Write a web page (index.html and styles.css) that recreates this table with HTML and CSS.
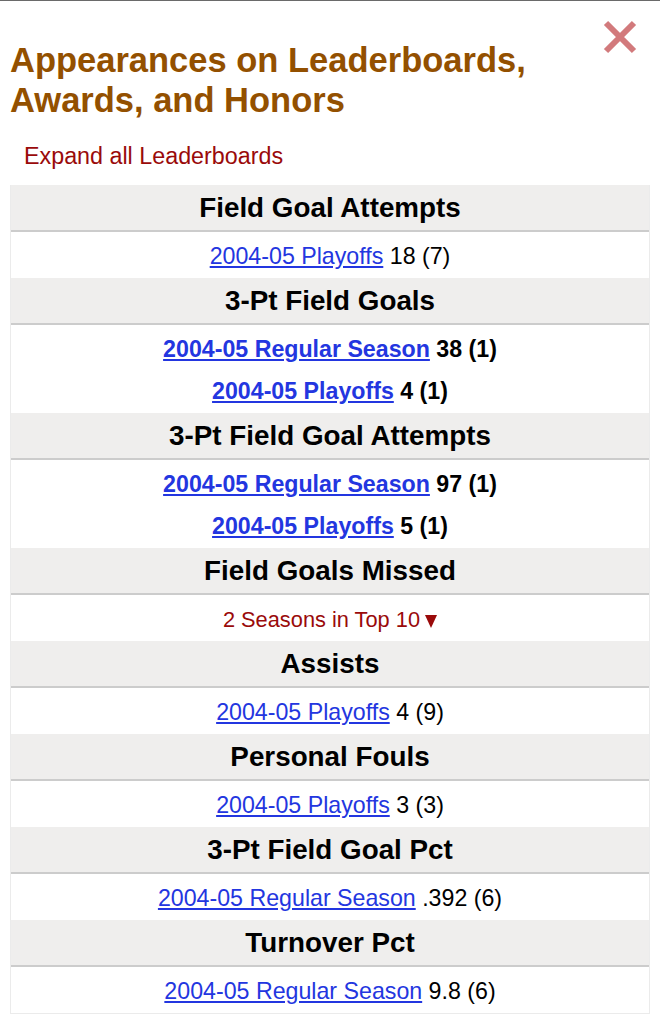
FILE: index.html
```html
<!DOCTYPE html>
<html>
<head>
<meta charset="utf-8">
<link rel="stylesheet" href="styles.css">
</head>
<body>
<div class="modal">
  <button class="close" aria-label="Close">
    <svg width="34" height="34" viewBox="0 0 34 34"><path d="M3 3 L31 31 M31 3 L3 31" stroke="#d27a7c" stroke-width="6" stroke-linecap="butt"/></svg>
  </button>
  <h2 class="title">Appearances on Leaderboards, Awards, and Honors</h2>
  <a class="expand" href="#">Expand all Leaderboards</a>
  <div class="boards">
    <div class="board">
      <div class="bhead">Field Goal Attempts</div>
      <div class="bbody">
        <div class="item"><a href="#">2004-05 Playoffs</a> 18 (7)</div>
      </div>
    </div>
    <div class="board">
      <div class="bhead">3-Pt Field Goals</div>
      <div class="bbody">
        <div class="item lead"><a href="#">2004-05 Regular Season</a> 38 (1)</div>
        <div class="item lead"><a href="#">2004-05 Playoffs</a> 4 (1)</div>
      </div>
    </div>
    <div class="board">
      <div class="bhead">3-Pt Field Goal Attempts</div>
      <div class="bbody">
        <div class="item lead"><a href="#">2004-05 Regular Season</a> 97 (1)</div>
        <div class="item lead"><a href="#">2004-05 Playoffs</a> 5 (1)</div>
      </div>
    </div>
    <div class="board">
      <div class="bhead">Field Goals Missed</div>
      <div class="bbody">
        <div class="item"><span class="toggle">2 Seasons in Top 10 <span class="arrow"></span></span></div>
      </div>
    </div>
    <div class="board">
      <div class="bhead">Assists</div>
      <div class="bbody">
        <div class="item"><a href="#">2004-05 Playoffs</a> 4 (9)</div>
      </div>
    </div>
    <div class="board">
      <div class="bhead">Personal Fouls</div>
      <div class="bbody">
        <div class="item"><a href="#">2004-05 Playoffs</a> 3 (3)</div>
      </div>
    </div>
    <div class="board">
      <div class="bhead">3-Pt Field Goal Pct</div>
      <div class="bbody">
        <div class="item"><a href="#">2004-05 Regular Season</a> .392 (6)</div>
      </div>
    </div>
    <div class="board">
      <div class="bhead">Turnover Pct</div>
      <div class="bbody">
        <div class="item"><a href="#">2004-05 Regular Season</a> 9.8 (6)</div>
      </div>
    </div>
  </div>
</div>
</body>
</html>
```
FILE: styles.css
```css
html, body {
  margin: 0;
  padding: 0;
  background: #fff;
}
body {
  font-family: "Liberation Sans", Arial, Helvetica, sans-serif;
  color: #000;
}
.modal {
  position: relative;
  border-top: 1px solid #6a6a6a;
  padding: 39px 10px 10px;
}
.close {
  position: absolute;
  top: 19px;
  right: 23px;
  width: 34px;
  height: 34px;
  padding: 0;
  border: 0;
  background: none;
  cursor: pointer;
}
.close svg {
  display: block;
}
.title {
  margin: 0;
  font-size: 34.5px;
  line-height: 40px;
  font-weight: bold;
  color: #935000;
  padding-right: 100px;
}
.expand {
  display: block;
  margin: 22px 0 15px 14px;
  font-size: 23.3px;
  line-height: 28px;
  color: #9a0a0a;
  text-decoration: none;
}
.boards {
  border: 1px solid #ebebeb;
  border-top: 0;
}
.bhead {
  background: #efeeed;
  text-align: center;
  font-weight: bold;
  font-size: 27.8px;
  line-height: 45px;
  border-bottom: 2px solid #cccccc;
}
.bbody {
  padding: 4px 0 1px;
  text-align: center;
}
.item {
  font-size: 23.2px;
  line-height: 41px;
}
.item.lead {
  font-weight: bold;
  line-height: 41.5px;
}
.item a {
  color: #2336e0;
  text-decoration: underline;
}
.toggle {
  color: #9a0a0a;
  font-size: 21.8px;
}
.arrow {
  display: inline-block;
  width: 0;
  height: 0;
  border-left: 6px solid transparent;
  border-right: 6px solid transparent;
  border-top: 13px solid #9a0a0a;
  vertical-align: -1px;
  margin-left: -1px;
}
```
